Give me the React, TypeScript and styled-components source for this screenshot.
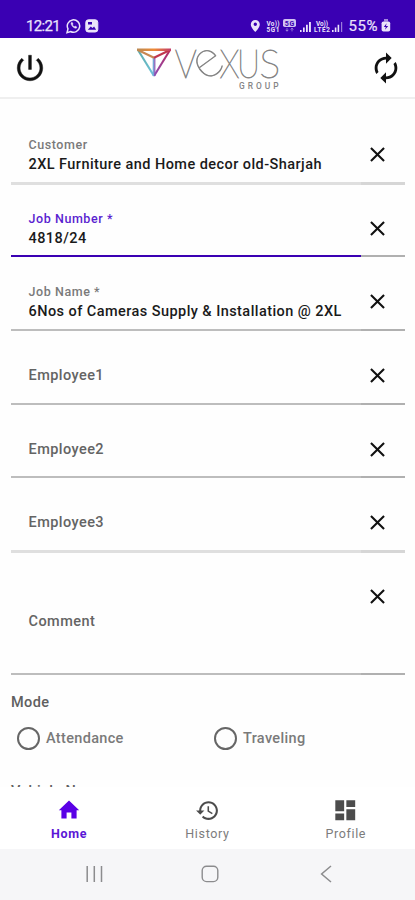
import React from 'react';
import styled, { createGlobalStyle } from 'styled-components';

const GlobalStyle = createGlobalStyle`
  * { box-sizing: border-box; }
  body { margin: 0; background: #fefefe; font-family: Roboto, "Liberation Sans", sans-serif; }
`;

const Screen = styled.div`
  display: flex;
  flex-direction: column;
  width: 415px;
  height: 900px;
  overflow: hidden;
  background: #fefefe;
`;

const StatusBar = styled.header`
  display: flex;
  flex: none;
  justify-content: space-between;
  height: 38px;
  padding: 13px 24px 0 26px;
  background: #3a00b3;
  color: #ebe3fb;
`;

const StatusGroup = styled.div`
  display: flex;
  align-items: center;
  height: 25px;
`;

const Clock = styled.span`
  width: 40px;
  font-size: 15px;
  letter-spacing: -0.65px;
  -webkit-text-stroke: 0.25px currentColor;
`;

const Battery = styled.span`
  margin: 0 3px 0 4px;
  font-size: 15px;
  letter-spacing: 0.55px;
  -webkit-text-stroke: 0.2px currentColor;
`;

const AppBar = styled.div`
  display: flex;
  flex: none;
  align-items: center;
  justify-content: space-between;
  height: 61px;
  padding: 0 12px 0 13px;
  background: #fff;
  border-bottom: 2px solid #efefef;
`;

const IconButton = styled.button`
  display: flex;
  padding: 0;
  border: 0;
  background: none;
  color: #111;
`;

const Form = styled.main`
  flex: none;
  height: 688px;
  padding: 11px 10px 0 11px;
  overflow: hidden;
`;

const Field = styled.div<{ $height: number }>`
  display: flex;
  flex-direction: column;
  height: ${p => p.$height}px;
`;

const FieldBody = styled.div`
  display: flex;
  flex: 1;
  min-height: 0;
`;

const FieldText = styled.div<{ $top: number }>`
  flex: 1;
  padding: ${p => p.$top}px 0 0 17.5px;
  white-space: nowrap;
`;

const Label = styled.div<{ $active?: boolean }>`
  font-size: 12.5px;
  font-weight: 500;
  line-height: 18px;
  letter-spacing: 0.57px;
  color: ${p => (p.$active ? '#5a1fd0' : '#7a7a7a')};
`;

const Value = styled.div`
  padding-top: 1px;
  font-size: 14.5px;
  font-weight: 500;
  line-height: 20px;
  letter-spacing: 0.44px;
  color: #1a1a1a;
`;

const Placeholder = styled.div`
  font-size: 14.5px;
  font-weight: 500;
  line-height: 20px;
  letter-spacing: 0.44px;
  color: #646464;
`;

const ClearButton = styled(IconButton)`
  flex: none;
  justify-content: center;
  width: 54px;
  padding: 31.5px 1px 0 0;
`;

const Underline = styled.div<{ $active?: boolean; $soft?: boolean }>`
  display: flex;
  flex: none;
  height: ${p => (p.$soft ? 3 : 2)}px;
  margin-bottom: ${p => (p.$soft ? -1 : 0)}px;
  background: ${p => (p.$soft ? '#d6d6d6' : '#b0b0b0')};

  &::before {
    content: '';
    width: 350px;
    background: ${p => (p.$active ? '#3a00b3' : p.$soft ? '#dfdfdf' : '#bdbdbd')};
  }
`;

const SectionLabel = styled.div<{ $gap: number }>`
  margin-top: ${p => p.$gap}px;
  font-size: 14.5px;
  font-weight: 500;
  line-height: 20px;
  letter-spacing: 0.4px;
  color: #606060;
`;

const Options = styled.div`
  display: grid;
  grid-template-columns: 197px 1fr;
  margin-top: 13px;
  padding-left: 6px;
`;

const Option = styled.label`
  display: flex;
  align-items: center;
  height: 24px;
  font-size: 14.5px;
  font-weight: 500;
  letter-spacing: 0.33px;
  color: #7a7a7a;
`;

const Radio = styled.span`
  width: 23px;
  height: 23px;
  margin-right: 6px;
  border: 2px solid #666;
  border-radius: 50%;
`;

const TabBar = styled.nav`
  display: grid;
  flex: none;
  grid-template-columns: repeat(3, 138.3px);
  height: 62px;
  background: #fff;
`;

const Tab = styled.div<{ $active?: boolean }>`
  display: flex;
  flex-direction: column;
  align-items: center;
  padding-top: 9px;
  font-size: 12.5px;
  font-weight: ${p => (p.$active ? 700 : 400)};
  line-height: 19px;
  letter-spacing: 0.65px;
  color: ${p => (p.$active ? '#5b16d6' : '#7c7c7c')};
`;

const TabIcon = styled.span<{ $active?: boolean }>`
  display: flex;
  align-items: center;
  justify-content: center;
  height: 28px;
  color: ${p => (p.$active ? '#5a00e6' : '#4c4c4c')};
`;

const SystemBar = styled.footer`
  display: flex;
  flex: none;
  align-items: center;
  justify-content: space-between;
  height: 51px;
  padding: 0 82px 2px 84px;
  background: #f6f6f8;
`;

const Glyph = ({ d, size, stroke = 0 }: { d: string; size: number; stroke?: number }) => (
  <svg width={size} height={size} viewBox="0 0 24 24" fill="currentColor" stroke="currentColor" strokeWidth={stroke}>
    <path d={d} />
  </svg>
);

const icons = {
  power:
    'M13 3h-2v10h2V3zm4.83 2.17l-1.42 1.42C17.99 7.86 19 9.81 19 12c0 3.87-3.13 7-7 7s-7-3.13-7-7c0-2.19 1.01-4.14 2.58-5.42L6.17 5.17C4.23 6.82 3 9.26 3 12c0 4.97 4.03 9 9 9s9-4.03 9-9c0-2.74-1.23-5.18-3.17-6.83z',
  renew:
    'M12 6v3l4-4-4-4v3c-4.42 0-8 3.58-8 8 0 1.57.46 3.03 1.24 4.26L6.7 14.8c-.45-.83-.7-1.79-.7-2.8 0-3.31 2.69-6 6-6zm6.76 1.74L17.3 9.2c.44.84.7 1.79.7 2.8 0 3.31-2.69 6-6 6v-3l-4 4 4 4v-3c4.42 0 8-3.58 8-8 0-1.57-.46-3.03-1.24-4.26z',
  close:
    'M19 6.41L17.59 5 12 10.59 6.41 5 5 6.41 10.59 12 5 17.59 6.41 19 12 13.41 17.59 19 19 17.59 13.41 12z',
  home: 'M9.6 20.6v-6h4.8v6h5.2v-8.4h2.6L12 2.4 1.8 12.2h2.6v8.4z',
  history:
    'M13 3c-4.97 0-9 4.03-9 9H1l3.89 3.89.07.14L9 12H6c0-3.87 3.13-7 7-7s7 3.13 7 7-3.13 7-7 7c-1.93 0-3.68-.79-4.94-2.06l-1.42 1.42C8.27 19.99 10.51 21 13 21c4.97 0 9-4.03 9-9s-4.03-9-9-9zm-1 5v5l4.28 2.54.72-1.21-3.5-2.08V8H12z',
  dashboard: 'M3 13h8V3H3v10zm0 8h8v-6H3v6zm10 0h8V11h-8v10zm0-18v6h8V3h-8z',
};

const NotificationIcons = () => (
  <svg width="33" height="16" viewBox="0 0 33 16" fill="none" stroke="currentColor">
    <path d="M1 14.6l1-3.7A6.2 6.2 0 1 1 4.6 13.5z" strokeWidth="1.5" />
    <path d="M5.3 4.6c-1.2 2 2.6 6.4 5 5.6l.6-1.2-1.8-1-.9.8-1.8-1.8.7-1-.8-1.6z" fill="currentColor" strokeWidth=".4" />
    <rect x="19.8" y="1.8" width="12" height="12.2" rx="2.6" fill="currentColor" />
    <path d="M21.8 11.8l3-3.3 1.7 1.6 1.6-1.5 2 3.2z" fill="#3a00b3" stroke="none" />
    <path d="M22 4h4v2.5h-4z" fill="#3a00b3" stroke="none" />
  </svg>
);

const SignalIcons = () => (
  <svg width="95" height="16" viewBox="0 0 95 16" fill="currentColor" fontFamily="Roboto, sans-serif" fontWeight="700">
    <path d="M5.3 2a4.5 4.5 0 0 0-4.5 4.5C.8 9.8 5.3 14 5.3 14s4.5-4.2 4.5-7.5A4.5 4.5 0 0 0 5.3 2zm0 6a1.7 1.7 0 1 1 0-3.4 1.7 1.7 0 0 1 0 3.4z" />
    <text x="16.5" y="7.8" fontSize="6.4" textLength="13">Vo))</text>
    <text x="16.5" y="13.8" fontSize="6.4" textLength="13">5G1</text>
    <rect x="33" y="1" width="13" height="8" rx="1.8" opacity=".85" />
    <text x="34.8" y="7.5" fontSize="7" fill="#3a00b3" textLength="9.5">5G</text>
    <path d="M37 10v3m-1.3-1.2l1.3 1.5 1.3-1.5M42 13.4v-3m-1.3 1.2l1.3-1.5 1.3 1.5" fill="none" stroke="currentColor" strokeWidth=".7" opacity=".7" />
    <path d="M50 12h1.6v2H50zm3-2.5h1.7V14H53zm3-2.7h1.8V14H56zm3-2.8h1.9v10H59z" />
    <text x="66" y="7.8" fontSize="6.4" textLength="12">Vo))</text>
    <text x="64" y="13.8" fontSize="6.4" textLength="16">LTE2</text>
    <path d="M82 12h1.6v2H82zm2.8-2.5h1.6V14h-1.6zm2.8-2.7h1.6V14h-1.6z" />
    <path d="M91 4h1.2v10H91z" opacity=".55" />
  </svg>
);

const ChargeIcon = () => (
  <svg width="10" height="13" viewBox="0 0 10 13" fill="currentColor">
    <path d="M3 0h4v2.5H3z" opacity=".6" />
    <rect x=".6" y="2.5" width="8.6" height="10" rx="1.8" />
    <path d="M5.6 4.3L2.8 8h2L4 10.8 7.2 7H5z" fill="#3a00b3" />
  </svg>
);

const LogoSvg = styled.svg`
  display: block;
  overflow: visible;
`;

const Logo = () => (
  <LogoSvg width="146" height="48" viewBox="136 44 146 48" fill="#858585" fontFamily="Lato, sans-serif">
    <defs>
      <linearGradient id="top" gradientUnits="userSpaceOnUse" x1="138" x2="172" y1="50" y2="50">
        <stop offset="0" stopColor="#b98a55" />
        <stop offset=".5" stopColor="#ee8a35" />
        <stop offset="1" stopColor="#c23b6b" />
      </linearGradient>
      <linearGradient id="left" x1="0" x2="1" y1="0" y2="1">
        <stop offset="0" stopColor="#5fa9a8" />
        <stop offset="1" stopColor="#6cc5dc" />
      </linearGradient>
      <linearGradient id="right" x1="1" x2="0" y1="0" y2="1">
        <stop offset="0" stopColor="#b52a5c" />
        <stop offset="1" stopColor="#8d4bb8" />
      </linearGradient>
    </defs>
    <g fill="none" strokeWidth="2.1" strokeLinejoin="round">
      <path d="M139 50l16 26" stroke="url(#left)" />
      <path d="M171 50l-16 26" stroke="url(#right)" />
      <path d="M154.5 58v18" stroke="#77a6d8" strokeWidth="1.6" />
      <path d="M155.8 58v18" stroke="#8a56b4" strokeWidth="1.2" />
      <path d="M139 50l16 7.8" stroke="#c78752" />
      <path d="M155 57.8L171 50" stroke="#c0364e" />
      <path d="M138 49.8h34" stroke="url(#top)" strokeWidth="2.4" />
    </g>
    <g fontSize="40" fontWeight="100" stroke="#858585" strokeWidth=".8">
      <text x="175.8" y="77.5" textLength="22" lengthAdjust="spacingAndGlyphs">V</text>
      <text x="0" y="0" fontSize="53" transform="translate(208.8 63.5) rotate(-36) translate(-13.2 13.6)">e</text>
      <text x="220.5" y="77.5" textLength="20" lengthAdjust="spacingAndGlyphs">X</text>
      <text x="238" y="77.5" textLength="23" lengthAdjust="spacingAndGlyphs">U</text>
      <text x="260.3" y="77.5" textLength="21" lengthAdjust="spacingAndGlyphs">S</text>
    </g>
    <text x="240" y="89" fontSize="8.4" fontWeight="500" fill="#858585" fontFamily="Roboto, sans-serif" textLength="39.5">GROUP</text>
  </LogoSvg>
);

type FieldData = { label: string; value?: string; active?: boolean; soft?: boolean; height: number };

const fields: FieldData[] = [
  { label: 'Customer', value: '2XL Furniture and Home decor old-Sharjah', soft: true, height: 74 },
  { label: 'Job Number *', value: '4818/24', active: true, height: 73 },
  { label: 'Job Name *', value: '6Nos of Cameras Supply & Installation @ 2XL', height: 74 },
  { label: 'Employee1', height: 74 },
  { label: 'Employee2', height: 73 },
  { label: 'Employee3', soft: true, height: 74 },
  { label: 'Comment', height: 123 },
];

const FormField = ({ label, value, active, soft, height }: FieldData) => (
  <Field $height={height}>
    <FieldBody>
      <FieldText $top={value ? 26 : height > 100 ? 60 : 35}>
        {value ? (
          <>
            <Label $active={active}>{label}</Label>
            <Value>{value}</Value>
          </>
        ) : (
          <Placeholder>{label}</Placeholder>
        )}
      </FieldText>
      <ClearButton aria-label={`Clear ${label}`}>
        <Glyph d={icons.close} size={25} />
      </ClearButton>
    </FieldBody>
    <Underline $active={active} $soft={soft} />
  </Field>
);

export default function App() {
  return (
    <Screen>
      <GlobalStyle />
      <StatusBar>
        <StatusGroup>
          <Clock>12:21</Clock>
          <NotificationIcons />
        </StatusGroup>
        <StatusGroup>
          <SignalIcons />
          <Battery>55%</Battery>
          <ChargeIcon />
        </StatusGroup>
      </StatusBar>
      <AppBar>
        <IconButton aria-label="Log out">
          <Glyph d={icons.power} size={34} stroke={0.3} />
        </IconButton>
        <Logo />
        <IconButton aria-label="Refresh">
          <Glyph d={icons.renew} size={34} />
        </IconButton>
      </AppBar>
      <Form>
        {fields.map(f => (
          <FormField key={f.label} {...f} />
        ))}
        <SectionLabel $gap={18}>Mode</SectionLabel>
        <Options>
          <Option><Radio />Attendance</Option>
          <Option><Radio />Traveling</Option>
        </Options>
        <SectionLabel $gap={32}>Vehicle No</SectionLabel>
      </Form>
      <TabBar>
        <Tab $active>
          <TabIcon $active><Glyph d={icons.home} size={24} /></TabIcon>
          Home
        </Tab>
        <Tab>
          <TabIcon><Glyph d={icons.history} size={25} /></TabIcon>
          History
        </Tab>
        <Tab>
          <TabIcon><Glyph d={icons.dashboard} size={26.5} /></TabIcon>
          Profile
        </Tab>
      </TabBar>
      <SystemBar>
        <svg width="20" height="18" viewBox="0 0 20 18" stroke="#8c8c8e" strokeWidth="1.5">
          <path d="M3.2 1v16M10.3 1v16M17.5 1v16" />
        </svg>
        <svg width="18" height="18" viewBox="0 0 18 18" fill="none" stroke="#8c8c8e" strokeWidth="1.4">
          <rect x="1.2" y="1.2" width="15.6" height="15.4" rx="4.4" />
        </svg>
        <svg width="18" height="18" viewBox="-4 0 18 18" fill="none" stroke="#8c8c8e" strokeWidth="1.5">
          <path d="M12 1L2.6 9l9.4 8" />
        </svg>
      </SystemBar>
    </Screen>
  );
}
